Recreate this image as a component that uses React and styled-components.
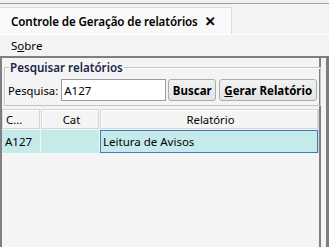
import React, { useState } from "react";
import styled, { createGlobalStyle } from "styled-components";

const GlobalStyle = createGlobalStyle`
  html, body {
    margin: 0;
    padding: 0;
    background: #f0f0f0;
  }
  * {
    box-sizing: border-box;
  }
`;

const Window = styled.div`
  width: 329px;
  height: 247px;
  display: flex;
  flex-direction: column;
  background: #f3f3f3;
  font-family: "Noto Sans", "DejaVu Sans", sans-serif;
  font-size: 11px;
  color: #000;
  overflow: hidden;
`;

const TopStrip = styled.div`
  height: 4px;
  background: #f0f0f0;
  border-bottom: 1px solid #a0a0a0;
`;

const TabBar = styled.div`
  height: 31px;
  padding-top: 4px;
  display: flex;
  align-items: flex-end;
  background: #f3f3f3;
  border-bottom: 1px solid #ffffff;
`;

const Tab = styled.div`
  width: 232px;
  height: 27px;
  display: flex;
  align-items: center;
  gap: 7px;
  padding-left: 11px;
  background: #f9f9f9;
  border-top: 1px solid #dedede;
  border-right: 1px solid #dedede;
  font-weight: 600;
  font-size: 11.6px;
  letter-spacing: -0.1px;
`;

const Close = styled.span`
  font-size: 13px;
  font-weight: 900;
  line-height: 1;
  -webkit-text-stroke: 0.6px #000;
`;

const MenuBar = styled.div`
  height: 21px;
  display: flex;
  align-items: center;
  padding-left: 11px;
  background: #f3f3f3;
  font-size: 11.5px;
`;

const MenuItem = styled.span`
  u {
    text-decoration: underline;
  }
`;

const Frame = styled.div`
  flex: 1;
  display: flex;
`;

const Panel = styled.div`
  width: 321px;
  display: flex;
  flex-direction: column;
  background: #f4f4f4;
  border-left: 2px solid #808080;
  border-top: 2px solid #7f7f7f;
  border-right: 2px solid #808080;
  padding: 2px 0 0 0;
`;

const Gap = styled.div`
  width: 5px;
  background: #f3f3f3;
  border-top: 2px solid #7f7f7f;
`;

const Edge = styled.div`
  flex: 1;
  background: #7d7d7d;
`;

const GroupBox = styled.fieldset`
  margin: 0 0 0 2px;
  width: 315px;
  padding: 4px 3px 4px 3px;
  border: 1px solid #c4c4c4;
  box-shadow: inset 1px 1px 0 #ffffff;
  display: flex;
  align-items: center;
  gap: 2px;
`;

const Legend = styled.legend`
  padding: 0 1px;
  margin-left: 1px;
  font-weight: 600;
  color: #1b2449;
  font-size: 11.6px;
`;

const Label = styled.label`
  font-size: 11.3px;
  margin-right: 1px;
`;

const Input = styled.input`
  width: 105px;
  height: 22px;
  border: 1px solid #9a9a9a;
  background: #ffffff;
  padding: 0 2px;
  font-family: inherit;
  font-size: 11.5px;
  outline: none;
`;

const Button = styled.button`
  height: 22px;
  width: ${({ $w }) => $w}px;
  margin-left: ${({ $ml }) => $ml || 0}px;
  padding: 0;
  border: 1px solid #acacac;
  border-radius: 3px;
  background: linear-gradient(#f2f2f2, #e4e4e4);
  font-family: inherit;
  font-size: 11.5px;
  font-weight: 700;
  color: #000;
  u {
    text-decoration: underline;
  }
`;

const Table = styled.div`
  margin: 3px 0 0 0;
  width: 317px;
  display: grid;
  grid-template-columns: 38px 58px 1fr;
  column-gap: 1px;
  border-right: 1px solid #d4d4d4;
  background: #f4f4f4;
`;

const HeadCell = styled.div`
  height: 20px;
  display: flex;
  align-items: center;
  justify-content: ${({ $align }) => $align || "center"};
  padding-left: 3px;
  background: #f4f4f4;
  border: 1px solid #d6d6d6;
  box-shadow: inset 1px 1px 0 #ffffff;
  font-size: 11.3px;
`;

const Cell = styled.div`
  height: 23px;
  margin-top: 1px;
  display: flex;
  align-items: center;
  padding-left: 2px;
  background: #c5eaea;
  border: 1px solid ${({ $focus }) => ($focus ? "#3c78c8" : "#c5eaea")};
  font-size: 11.5px;
`;

export default function App() {
  const [query, setQuery] = useState("A127");

  return (
    <>
      <GlobalStyle />
      <Window>
        <TopStrip />
        <TabBar>
          <Tab>
            Controle de Geração de relatórios
            <Close>✕</Close>
          </Tab>
        </TabBar>
        <MenuBar>
          <MenuItem>
            S<u>o</u>bre
          </MenuItem>
        </MenuBar>
        <Frame>
          <Panel>
            <GroupBox>
              <Legend>Pesquisar relatórios</Legend>
              <Label>Pesquisa:</Label>
              <Input value={query} onChange={(e) => setQuery(e.target.value)} />
              <Button $w={48}>Buscar</Button>
              <Button $w={98} $ml={1}>
                <u>G</u>erar Relatório
              </Button>
            </GroupBox>
            <Table>
              <HeadCell $align="flex-start">C...</HeadCell>
              <HeadCell>Cat</HeadCell>
              <HeadCell>Relatório</HeadCell>
              <Cell>A127</Cell>
              <Cell />
              <Cell $focus>Leitura de Avisos</Cell>
            </Table>
          </Panel>
          <Gap />
          <Edge />
        </Frame>
      </Window>
    </>
  );
}
